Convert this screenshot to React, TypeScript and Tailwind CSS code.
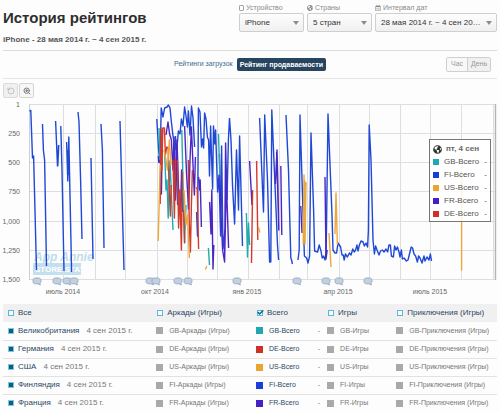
import React, { useState } from 'react';
import { Check, RotateCcw, ZoomIn } from 'lucide-react';
import { FaGlobeAmericas, FaRegCalendarAlt } from 'react-icons/fa';

// One country row of the table below the chart
interface Country {
  code: string;
  name: string;
  swatch: string;
}

interface Series {
  code: string;
  color: string;
  path: string;
}

const DATE = '4 сен 2015 г.';

const COUNTRIES: Country[] = [
  { code: 'GB', name: 'Великобритания', swatch: 'bg-[#1fa8b0]' },
  { code: 'DE', name: 'Германия', swatch: 'bg-[#cf3027]' },
  { code: 'US', name: 'США', swatch: 'bg-[#eba432]' },
  { code: 'FI', name: 'Финляндия', swatch: 'bg-[#1740d8]' },
  { code: 'FR', name: 'Франция', swatch: 'bg-[#4520c4]' },
];

const LEGEND = ['GB', 'FI', 'US', 'FR', 'DE'];

const Y_TICKS = [
  { label: '1', y: 104 },
  { label: '250', y: 133 },
  { label: '500', y: 162 },
  { label: '750', y: 191 },
  { label: '1,000', y: 221 },
  { label: '1,250', y: 250 },
  { label: '1,500', y: 279 },
];

const X_TICKS = [
  { label: 'июль 2014', x: 63 },
  { label: 'окт 2014', x: 155 },
  { label: 'янв 2015', x: 247 },
  { label: 'апр 2015', x: 338 },
  { label: 'июль 2015', x: 430 },
];

const MONTH_LINES = [63, 95, 125, 157, 187, 217, 248, 279, 307, 339, 369, 400, 430, 461, 493];

const EVENTS = [37, 57, 67, 74, 150, 156, 178, 188, 237, 297, 326, 339, 368];

const SERIES: Series[] = [
  {
    code: 'FI',
    color: '#1f48d6',
    path:
      'M29.5 111L30.8 110.5L32.5 158L33.6 156L36.5 270 M42.5 124L43.4 150L44.6 160L46.5 266 M55.6 121L57.5 166L58.6 145 M57.8 166L58.8 145 ' +
      'M60.8 126L62 170L64 271 M66.6 142L67.8 181L68.8 137L71.6 272 M67.4 150L68.2 175 M78 112L79 122L80.6 180L82 239 M91 158L93 259 ' +
      'M101 124L102.4 150L104 248 M120 121L124 270 ' +
      'M156.8 119L158.6 150L160 163L161.2 108L163 117L164.6 108L167 107L168.4 105L170 108L171.4 122L173 136L175 148L176.6 152L178.4 131L180 134L181.4 119L183 126L184.6 107L186 116L187.4 127L188.4 111L190 135L191.5 106L193 118L194.6 147 ' +
      'M175.5 136L176.5 172L177.6 205 M196.6 212L197.5 236L198.4 108L200 112L201.5 147L202.6 139L203.6 148L204.6 113L206 119L207.4 137L208.6 140L209.5 176L210.6 126L212.6 189L213.5 126L214.8 144L215.6 130L217.6 192L219 175L220.6 236L221.6 146L223 249L225 230 ' +
      'M229.5 118L231 140L232.5 185L234.6 224L236.5 150L238.5 210L239.6 136L242.5 246 M227 200L228.4 140L229.5 118 ' +
      'M259.6 118L263.5 212L264.7 115L267.5 180L269.6 262L270.8 262L271.8 110L275 185L277.5 245L278.6 260 M286 115L288.5 170L290.8 258L291.6 260L292.4 264 ' +
      'M298 260L299.2 250L300 115L304.4 256L306.6 258L308 263L309.6 256L311 133L313.6 210L314.6 251L317.6 252L319.2 245L321 251L322.2 258L323.4 256L325 260L326.2 250L328 114L332 215L333 250L335 253L336.6 253L338 243L340.6 247L342 255L343.2 255L344.2 260L345.4 254L347.4 257L349.4 253L351 255L352.8 249L354.2 252L355.6 250L357 245L358 251L359.4 245L361 241L363 242L364.4 246L366 243L367.6 247L368.4 230L369.2 125L371 160L373 240L374.4 254L375.6 246L377 250L379 255L380.6 251L382.4 250L384 252L386 249L387.6 252L389 245L390.4 245L391.4 256L393.4 257L394.6 246L396 250L397.4 247L399 252L400 257L401.4 250L402.4 259L404 258L406.4 261L408 260L410 252L411.2 247L412.6 248L414 254L415.6 256L417.4 262L418.6 256L420 258L422 263L424 256L425 261L427 257L429 260L430.4 254L431.5 261',
  },
  {
    code: 'FR',
    color: '#4a27c4',
    path:
      'M158.4 156L158.8 163 M160.2 140L161.4 194L162.4 130 M166 135L168 122L169.6 134L171.4 140L173 170L174 137L175.4 200L177 140L178.6 190L180.4 213L181.6 170L182.4 212 ' +
      'M184.6 126L186.6 175L188.6 209L190 160L191.4 127L193 165L194.4 195L195.4 157 M198.6 177L199.6 190L200.2 180L201.4 227 ' +
      'M209.6 202L211 234L211.8 190L213 269L213.8 245 M219.4 154L220.8 210L222.6 250L224.6 262L225.6 143L227 200L228.6 248 M224.6 262L226.4 180 ' +
      'M249.6 161L252 205 M275.4 184L277 150L277.8 180L278.8 230L276.6 152 M280.8 166L281.8 235 M300.8 206L302 233 M325 177L326 259L327.2 250',
  },
  {
    code: 'GB',
    color: '#22aab2',
    path:
      'M159 128L160 160 M164.6 150L166 190L167 180L168.2 218L170 161L171.4 195L173 230 M181.8 130L183.2 190L184.6 243L186 205 M208.4 248L209.5 265 ' +
      'M218.5 134L219.8 175 M246.4 213L247.5 257L248.5 223L249.6 245',
  },
  {
    code: 'DE',
    color: '#d23a2c',
    path:
      'M160.2 204L161 128L161.8 170L162.8 128L164.4 128L165.4 155L166.8 147L168.2 148L169 185L170.4 216L171.2 185 M173 160L174.4 218L175.4 158 M177.4 160L178.6 228L179.8 190L181.4 250L182.4 172 ' +
      'M188.4 160L189.2 220L190.4 252L191.4 205L192.4 170 M183.6 210L184.6 243 M196 188L197.2 188L198.6 249 M252.6 190L251.5 263 M256.6 161L257.8 240',
  },
  {
    code: 'US',
    color: '#eba73c',
    path:
      'M158.2 241L159.8 180L160.2 165 M164 150L166 160L167.4 170L169.4 140L171 165 M184 190L186 225L187.6 215L189.4 258 M205.4 269.5L206.8 266 ' +
      'M258.4 227L259.8 232.5 M303.2 244L304 175L305 244L306 182 M303.8 240L304.6 180 M329 233L331 267 M335 234L336 193L337.4 245 M461.6 170L461.6 270.5',
  },
];

const findCountry = (code: string) => COUNTRIES.find((c) => c.code === code)!;

// Labelled drop-down of the header
function Filter({
  id,
  label,
  icon,
  value,
  className,
}: {
  id: string;
  label: string;
  icon: React.ReactNode;
  value: string;
  className: string;
}) {
  return (
    <div className={className}>
      <label htmlFor={id} className="flex h-2 items-center gap-0.5 text-[7px] leading-[8px] text-[#8a8a8a]">
        {icon}
        {label}
      </label>
      <div className="relative mt-px">
        <select
          id={id}
          className="block h-[19px] w-full appearance-none overflow-hidden rounded-xs border border-[#cfcfcf] bg-linear-to-b from-[#fdfdfd] to-[#f0f0f0] pr-3 pl-[5px] text-[8px] text-ellipsis whitespace-nowrap text-[#333]"
        >
          <option>{value}</option>
        </select>
        <span className="pointer-events-none absolute top-2 right-[5px] border-x-[3px] border-t-[4px] border-x-transparent border-t-[#8c8c8c]" />
      </div>
    </div>
  );
}

function Chart() {
  return (
    <svg viewBox="0 100 500 198" className="block w-full" role="img" aria-label="История рейтингов">
      {/* watermark */}
      <g fontFamily="'Liberation Sans Narrow', 'Liberation Sans', sans-serif">
        <text x="34" y="261" fontSize="12" fontStyle="italic" fontWeight="bold" fill="#c0deed">
          App Annie
        </text>
        <rect x="33" y="263" width="48" height="12" fill="#c4dfee" />
        <text x="35" y="272" fontSize="8" fontWeight="bold" fill="#fff">
          STORE STATS
        </text>
      </g>

      {/* grid */}
      <g stroke="#dedede" strokeWidth="1">
        {MONTH_LINES.map((x) => (
          <line key={x} x1={x + 0.5} x2={x + 0.5} y1="104" y2="280" />
        ))}
        {Y_TICKS.map((t) => (
          <line key={t.label} x1="29" x2="495" y1={t.y + 0.5} y2={t.y + 0.5} />
        ))}
      </g>
      <line x1="29.5" x2="29.5" y1="104" y2="280" stroke="#cfcfcf" />
      <line x1="495.5" x2="495.5" y1="104" y2="280" stroke="#b4b4b4" strokeWidth="1.4" />

      {SERIES.map((s) => (
        <path key={s.code} d={s.path} fill="none" stroke={s.color} strokeWidth="1.4" strokeLinejoin="round" />
      ))}

      {/* event bubbles */}
      {EVENTS.map((x) => (
        <g key={x} transform={`translate(${x} 281)`}>
          <path
            d="M-1.4 -3H1.4C3 -3 4 -2 4 -.6V.4C4 1.4 3.6 2 2.8 2.3L3.4 4L1 2.8H-1.4C-3 2.8 -4 1.8 -4 .4V-.6C-4 -2 -3 -3 -1.4 -3Z"
            fill="#c3d0df"
            stroke="#92a7bf"
            strokeWidth=".9"
          />
        </g>
      ))}

      <g fontFamily="'Liberation Sans', Arial, sans-serif" fontSize="7" fill="#666">
        {Y_TICKS.map((t) => (
          <text key={t.label} x="20" y={t.y + 3} textAnchor="end">
            {t.label}
          </text>
        ))}
        {X_TICKS.map((t) => (
          <text key={t.label} x={t.x} y="294" textAnchor="middle">
            {t.label}
          </text>
        ))}
      </g>
    </svg>
  );
}

function Legend() {
  return (
    <div className="absolute top-[39px] right-[9px] w-[62px] border border-[#777] bg-white/85 px-[3px] pt-[3px] pb-px">
      <div className="flex h-3 items-center gap-1 text-[8px] font-bold text-[#666]">
        <FaGlobeAmericas className="size-[9px] text-[#333]" />
        пт, 4 сен
      </div>
      <ul>
        {LEGEND.map((code) => (
          <li key={code} className="flex h-[13px] items-center text-[8px] text-[#555]">
            <span className={`mr-[5px] size-1.5 ${findCountry(code).swatch}`} />
            {code}-Всего
            <span className="ml-auto">-</span>
          </li>
        ))}
      </ul>
    </div>
  );
}

function ColumnToggle({ label, defaultChecked }: { label: string; defaultChecked?: boolean }) {
  const [checked, setChecked] = useState(!!defaultChecked);

  return (
    <label className="flex items-center gap-1">
      <span className="relative size-1.5 shrink-0">
        <input
          type="checkbox"
          checked={checked}
          onChange={(e) => setChecked(e.target.checked)}
          className="block size-1.5 appearance-none border border-[#5bb6dc] bg-white"
        />
        {checked && (
          <Check strokeWidth={5} className="pointer-events-none absolute -top-px left-0 size-[7px] text-[#0d5f80]" />
        )}
      </span>
      {label}
    </label>
  );
}

function SeriesCell({ label, swatch, active }: { label: string; swatch: string; active?: boolean }) {
  return (
    <td className="p-0 pl-[3px]">
      <div className="flex items-center gap-1.5 whitespace-nowrap">
        <span className={`size-[7px] shrink-0 ${swatch}`} />
        <span className={active ? 'text-[#2c4763]' : 'text-[#777]'}>{label}</span>
        {active && <span className="mr-1 ml-auto text-[#777]">-</span>}
      </div>
    </td>
  );
}

function RankTable() {
  return (
    <table className="w-full table-fixed border-collapse text-left">
      <colgroup>
        <col className="w-[30.4%]" />
        <col className="w-[20.2%]" />
        <col className="w-[14.4%]" />
        <col className="w-[14%]" />
        <col className="w-[21%]" />
      </colgroup>
      <thead>
        <tr className="h-[18px] bg-[#f0f0f0] text-[8px] whitespace-nowrap text-[#2c4763]">
          <th className="p-0 pl-[5px] font-normal"><ColumnToggle label="Все" /></th>
          <th className="p-0 pl-1 font-normal"><ColumnToggle label="Аркады (Игры)" /></th>
          <th className="p-0 pl-1 font-normal"><ColumnToggle label="Всего" defaultChecked /></th>
          <th className="p-0 pl-1 font-normal"><ColumnToggle label="Игры" /></th>
          <th className="p-0 pl-1 font-normal"><ColumnToggle label="Приключения (Игры)" /></th>
        </tr>
      </thead>
      <tbody>
        {COUNTRIES.map((c) => (
          <tr key={c.code} className="h-[18px] border-b border-[#e2e2e2] text-[7px] last:border-b-0">
            <td className="p-0 pl-[5px]">
              <label className="flex items-center gap-1 text-[8px] whitespace-nowrap text-[#2c4763]">
                <input
                  type="checkbox"
                  defaultChecked
                  className="size-1.5 shrink-0 appearance-none border border-[#7cc4e2] bg-[#eaf6fb] checked:bg-[#0d5f80]"
                />
                {c.name}
                <span className="ml-[3px] text-[#777]">{DATE}</span>
              </label>
            </td>
            <SeriesCell label={`${c.code}-Аркады (Игры)`} swatch="bg-[#a9a9a9]" />
            <SeriesCell label={`${c.code}-Всего`} swatch={c.swatch} active />
            <SeriesCell label={`${c.code}-Игры`} swatch="bg-[#a9a9a9]" />
            <SeriesCell label={`${c.code}-Приключения (Игры)`} swatch="bg-[#a9a9a9]" />
          </tr>
        ))}
      </tbody>
    </table>
  );
}

export default function App() {
  return (
    <main className="min-h-screen bg-[#fdfdfd] font-['Liberation_Sans',Arial,sans-serif] text-[#333]">
      <div className="px-[3px]">
        <header className="flex h-[51px] justify-between border-b border-[#dcdcdc] pt-1">
          <div>
            <h1 className="mt-1 text-[15px] leading-5 font-bold whitespace-nowrap text-[#2e2e2e]">История рейтингов</h1>
            <p className="mt-1.5 text-[8px] leading-3 font-bold whitespace-nowrap text-[#555]">
              iPhone - 28 мая 2014 г. ~ 4 сен 2015 г.
            </p>
          </div>
          <div className="flex gap-[3px]">
            <Filter
              id="device"
              label="Устройство"
              icon={
                <svg viewBox="0 0 5 6" className="h-1.5 w-[5px]" fill="none" stroke="#8a8a8a" strokeWidth=".8">
                  <rect x=".5" y=".5" width="4" height="5" rx=".6" />
                </svg>
              }
              value="iPhone"
              className="w-[65px]"
            />
            <Filter
              id="countries"
              label="Страны"
              icon={<FaGlobeAmericas className="size-1.5" />}
              value="5 стран"
              className="w-[65px]"
            />
            <Filter
              id="range"
              label="Интервал дат"
              icon={<FaRegCalendarAlt className="size-1.5" />}
              value="28 мая 2014 г. ~ 4 сен 2015 г."
              className="w-[122px]"
            />
          </div>
        </header>

        <nav className="relative flex h-7 items-center justify-center border-b border-[#e4e4e4] text-[7px]">
          <a href="#downloads" className="text-[#3c6a92]">Рейтинги загрузок</a>
          <a href="#grossing" className="ml-1 rounded-xs bg-[#27455f] px-[3px] leading-[13px] font-bold text-white">
            Рейтинг продаваемости
          </a>
          <div className="absolute right-1.5 flex rounded-xs border border-[#cfcfcf] text-[#999]">
            <button type="button" className="h-[13px] w-5 bg-[#f8f8f8]">Час</button>
            <button type="button" className="h-[13px] w-[23px] border-l border-[#cfcfcf] bg-[#f0f0f0]">День</button>
          </div>
        </nav>

        <div className="flex h-[21px] gap-px pt-1">
          <button
            type="button"
            aria-label="Сбросить масштаб"
            className="flex size-[15px] items-center justify-center rounded-xs border border-[#dadada] bg-[#f0f0f0]"
          >
            <RotateCcw className="size-2 text-[#aaa]" />
          </button>
          <button
            type="button"
            aria-label="Увеличить"
            className="flex size-[15px] items-center justify-center rounded-xs border border-[#d4d4d4] bg-[#f7f7f7]"
          >
            <ZoomIn className="size-2 text-[#777]" strokeWidth={3} />
          </button>
        </div>
      </div>

      <section className="relative">
        <Chart />
        <Legend />
      </section>

      <section className="px-[3px] pt-1.5">
        <RankTable />
      </section>
    </main>
  );
}
